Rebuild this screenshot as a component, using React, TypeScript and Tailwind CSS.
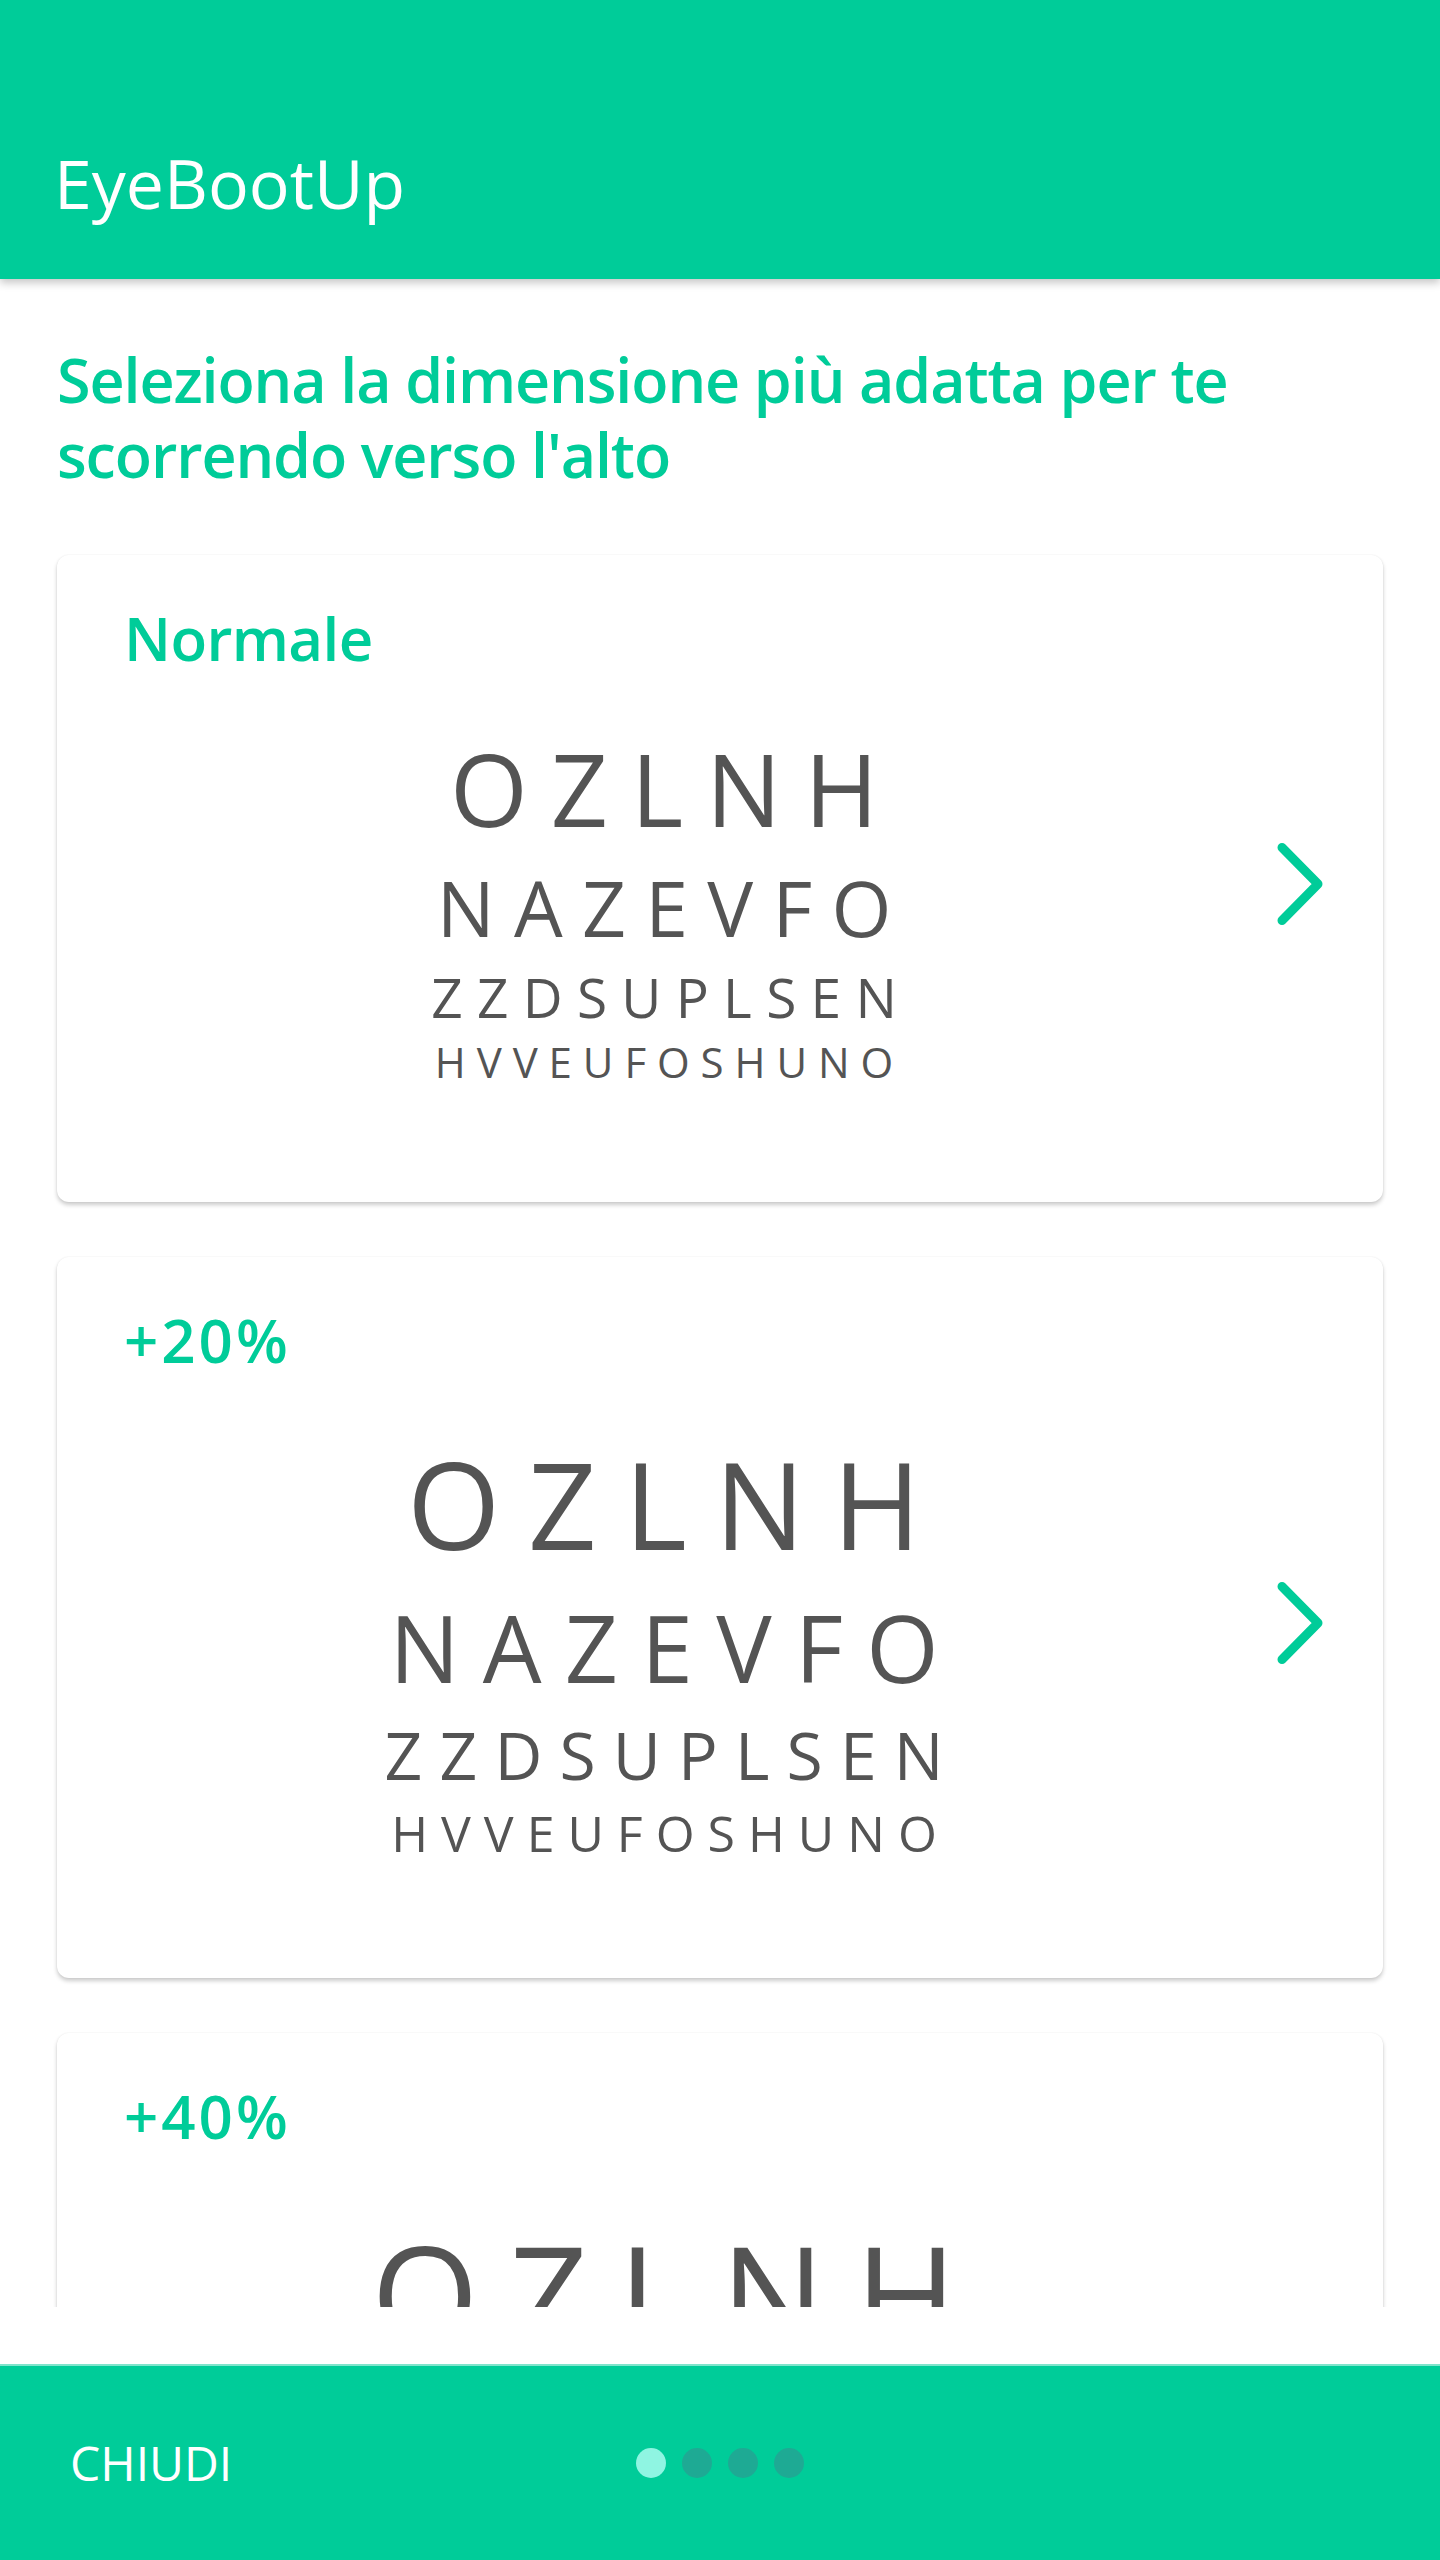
import React from "react";

type Line = { text: string; cls: string };
type CardData = { label: string; labelCls: string; lines: Line[] };

const cards: CardData[] = [
  {
    label: "Normale",
    labelCls: "tracking-[-0.6px]",
    lines: [
      { text: "OZLNH", cls: "text-[100px] tracking-[0.23em] pl-[0.23em]" },
      { text: "NAZEVFO", cls: "text-[77px] tracking-[0.25em] pl-[0.25em]" },
      { text: "ZZDSUPLSEN", cls: "text-[55px] tracking-[0.26em] pl-[0.26em]" },
      { text: "HVVEUFOSHUNO", cls: "text-[42px] tracking-[0.26em] pl-[0.26em]" },
    ],
  },
  {
    label: "+20%",
    labelCls: "tracking-[3px]",
    lines: [
      { text: "OZLNH", cls: "text-[120px] tracking-[0.23em] pl-[0.23em]" },
      { text: "NAZEVFO", cls: "text-[93px] tracking-[0.25em] pl-[0.25em]" },
      { text: "ZZDSUPLSEN", cls: "text-[66px] tracking-[0.26em] pl-[0.26em]" },
      { text: "HVVEUFOSHUNO", cls: "text-[50px] tracking-[0.26em] pl-[0.26em]" },
    ],
  },
  {
    label: "+40%",
    labelCls: "tracking-[3px]",
    lines: [
      { text: "OZLNH", cls: "text-[138px] tracking-[0.22em] pl-[0.22em]" },
      { text: "NAZEVFO", cls: "text-[107px] tracking-[0.25em] pl-[0.25em]" },
      { text: "ZZDSUPLSEN", cls: "text-[77px] tracking-[0.26em] pl-[0.26em]" },
      { text: "HVVEUFOSHUNO", cls: "text-[59px] tracking-[0.26em] pl-[0.26em]" },
    ],
  },
];

function Chevron() {
  return (
    <svg width="60" height="96" viewBox="0 0 60 96" fill="none">
      <path
        d="M12 11.5 L48 48 L12 84.5"
        stroke="#00cc99"
        strokeWidth="9"
        strokeLinecap="round"
        strokeLinejoin="round"
      />
    </svg>
  );
}

function Card({ data }: { data: CardData }) {
  return (
    <div className="flex shrink-0 rounded-[12px] bg-white shadow-[0_3px_4px_rgba(0,0,0,0.2),0_0_2px_rgba(0,0,0,0.07)]">
      <div className="flex flex-1 flex-col pl-[67px] pt-[43px] pb-[111px]">
        <div className={`text-[60px] font-semibold leading-[81px] text-[#00cc99] ${data.labelCls}`}>
          {data.label}
        </div>
        <div className="mt-[42px] flex flex-col items-center text-[#545454]">
          {data.lines.map((l) => (
            <div key={l.text} className={`leading-[1.35] whitespace-nowrap ${l.cls}`}>
              {l.text}
            </div>
          ))}
        </div>
      </div>
      <div className="flex w-[179px] items-center justify-center pl-[12px] pt-[11px]">
        <Chevron />
      </div>
    </div>
  );
}

export default function App() {
  return (
    <div
      className="flex h-[2560px] w-[1440px] flex-col overflow-hidden bg-white"
      style={{ fontFamily: "'Open Sans', 'Noto Sans', sans-serif" }}
    >
      <header className="relative z-10 flex h-[279px] shrink-0 items-center bg-[#00cc99] pl-[54px] pt-[86px] shadow-[0_4px_8px_rgba(0,0,0,0.22)]">
        <h1 className="text-[68px] font-normal leading-none text-white">EyeBootUp</h1>
      </header>

      <main className="h-[2028px] shrink-0 overflow-hidden px-[57px] pt-[63px]">
        <h2 className="text-[61px] font-semibold leading-[75px] tracking-[-1.1px] text-[#00cc99] whitespace-nowrap">
          Seleziona la dimensione più adatta per te
          <br />
          scorrendo verso l'alto
        </h2>
        <div className="mt-[63px] flex flex-col gap-[55px]">
          {cards.map((c) => (
            <Card key={c.label} data={c} />
          ))}
        </div>
      </main>

      <div className="h-[57px] shrink-0 bg-white" />

      <footer className="grid h-[196px] shrink-0 grid-cols-[1fr_auto_1fr] items-center border-t-2 border-[#7fe4cb] bg-[#00cc99]">
        <div className="pl-[70px] text-[48px] leading-none text-white">CHIUDI</div>
        <div className="flex items-center gap-[16px]">
          <span className="h-[30px] w-[30px] rounded-full bg-[#8ff5e2]" />
          <span className="h-[30px] w-[30px] rounded-full bg-[#1eaa94]" />
          <span className="h-[30px] w-[30px] rounded-full bg-[#1eaa94]" />
          <span className="h-[30px] w-[30px] rounded-full bg-[#1eaa94]" />
        </div>
        <div />
      </footer>
    </div>
  );
}
